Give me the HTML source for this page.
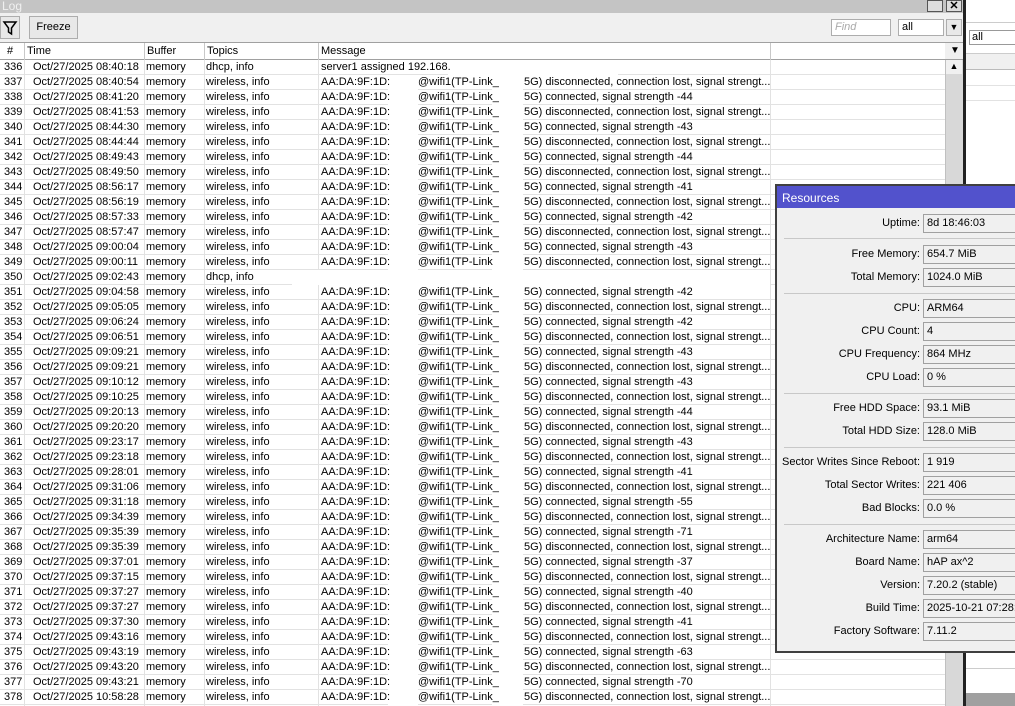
<!DOCTYPE html>
<html><head><meta charset="utf-8"><style>
*{margin:0;padding:0;box-sizing:border-box}
body{width:1015px;height:706px;overflow:hidden;position:relative;background:#fff;font-family:"Liberation Sans",sans-serif;font-size:11px;color:#000}
.abs{position:absolute}
#title{left:0;top:0;width:966px;height:13px;background:#c4c4c4;color:#f0f0f0;font-size:12px;line-height:12px;padding-left:2px}
#tb{left:0;top:13px;width:966px;height:29px;background:#f0f0f0}
.btn{position:absolute;border:1px solid #adadad;background:#e8e8e8}
#hdr{left:0;top:42px;width:945px;height:18px;background:#fff;border-top:1px solid #a0a0a0;border-bottom:1px solid #a0a0a0}
#hdr span{position:absolute;top:2px}
.vl{position:absolute;top:0;width:1px;height:17px;background:#c8c8c8}
#body{left:0;top:60px;width:945px;height:646px}
.r{position:relative;height:15px;border-bottom:1px solid #e2e2e2;line-height:14px;white-space:nowrap}
.r span{position:absolute;top:0}
.n{left:4px}.t{left:33px}.b{left:146px}.p{left:206px}.m{left:321px}.m2{left:418px}.m3{left:524px}
.g{background:#fff;height:15px;top:0}
.c{position:absolute;top:0;width:1px;height:646px;background:#e2e2e2}
#res{left:775px;top:184px;width:245px;height:469px;border:2px solid #404040;border-right:none;background:#f0f0f0}
#rt{left:0;top:0;width:243px;height:22px;background:#5252cc;color:#fff;padding:5px 0 0 5px;font-size:12px}
.lb{position:absolute;right:100px;text-align:right;white-space:nowrap}
.vb{position:absolute;left:146px;width:100px;height:19px;border:1px solid #a0a0a0;background:#f0f0f0;padding:2px 0 0 3px;white-space:nowrap}
.sp{position:absolute;left:7px;width:240px;height:1px;background:#c8c8c8}
</style></head><body>
<div id="title" class="abs">Log</div>
<div class="abs" style="left:927px;top:0;width:16px;height:12px;border:1px solid #555;background:#ddd"></div>
<div class="abs" style="left:946px;top:0;width:16px;height:12px;border:1px solid #555;background:#ddd;font-size:11px;line-height:10px;text-align:center;font-weight:bold">✕</div>
<div id="tb" class="abs">
<div class="btn" style="left:0;top:3px;width:20px;height:23px"><svg width="18" height="20" viewBox="0 0 18 20"><path d="M3 5h12l-4.5 6v6l-3-2v-4z" fill="none" stroke="#000" stroke-width="1.5"/></svg></div>
<div class="btn" style="left:29px;top:3px;width:49px;height:23px;text-align:center;line-height:21px">Freeze</div>
<div class="btn" style="left:831px;top:6px;width:60px;height:17px;background:#fff;color:#aaa;font-style:italic;padding-left:3px;line-height:15px">Find</div>
<div class="btn" style="left:898px;top:6px;width:46px;height:17px;background:#fff;padding-left:3px;line-height:15px">all</div>
<div class="btn" style="left:946px;top:6px;width:16px;height:17px;font-size:9px;text-align:center;line-height:15px">▼</div>
</div>
<div id="hdr" class="abs">
<span style="left:7px">#</span><span style="left:27px">Time</span><span style="left:147px">Buffer</span><span style="left:207px">Topics</span><span style="left:321px">Message</span>
<div class="vl" style="left:24px"></div><div class="vl" style="left:144px"></div><div class="vl" style="left:204px"></div><div class="vl" style="left:318px"></div><div class="vl" style="left:770px"></div>
</div>
<div class="abs" style="left:945px;top:42px;width:20px;height:18px;background:#f0f0f0;border-top:1px solid #a0a0a0;border-bottom:1px solid #a0a0a0;font-size:10px;text-align:center;line-height:16px">▼</div>
<div class="abs" style="left:945px;top:60px;width:18px;height:646px;background:#d8d8d8;border-left:1px solid #c0c0c0"></div>
<div class="abs" style="left:946px;top:60px;width:16px;height:14px;background:#f0f0f0;font-size:9px;text-align:center;line-height:13px">▲</div>
<div class="abs" style="left:963px;top:0;width:3px;height:706px;background:#222"></div>
<div class="abs" style="left:966px;top:0;width:49px;height:706px;background:#fff"></div>
<div class="abs" style="left:966px;top:22px;width:49px;height:1px;background:#ccc"></div>
<div class="abs" style="left:969px;top:30px;width:50px;height:15px;border:1px solid #999;padding-left:2px;line-height:13px">all</div>
<div class="abs" style="left:966px;top:53px;width:49px;height:17px;background:#f0f0f0;border-top:1px solid #ccc;border-bottom:1px solid #bbb"></div>
<div class="abs" style="left:966px;top:85px;width:49px;height:1px;background:#e2e2e2"></div>
<div class="abs" style="left:966px;top:100px;width:49px;height:1px;background:#e2e2e2"></div>
<div class="abs" style="left:966px;top:668px;width:49px;height:1px;background:#ccc"></div>
<div class="abs" style="left:966px;top:693px;width:49px;height:13px;background:#a0a0a0"></div>
<div id="body" class="abs">
<div class="c" style="left:24px"></div><div class="c" style="left:144px"></div><div class="c" style="left:204px"></div><div class="c" style="left:318px"></div><div class="c" style="left:770px"></div>
<div class="r"><span class="n">336</span><span class="t">Oct/27/2025 08:40:18</span><span class="b">memory</span><span class="p">dhcp, info</span><span class="g" style="left:448px;width:170px"></span><span class="m">server1 assigned 192.168.</span></div>
<div class="r"><span class="n">337</span><span class="t">Oct/27/2025 08:40:54</span><span class="b">memory</span><span class="p">wireless, info</span><span class="g" style="left:388px;width:30px"></span><span class="g" style="left:492px;width:31px"></span><span class="m">AA:DA:9F:1D:</span><span class="m2">@wifi1(TP-Link_</span><span class="m3">5G) disconnected, connection lost, signal strengt...</span></div>
<div class="r"><span class="n">338</span><span class="t">Oct/27/2025 08:41:20</span><span class="b">memory</span><span class="p">wireless, info</span><span class="g" style="left:388px;width:30px"></span><span class="g" style="left:492px;width:31px"></span><span class="m">AA:DA:9F:1D:</span><span class="m2">@wifi1(TP-Link_</span><span class="m3">5G) connected, signal strength -44</span></div>
<div class="r"><span class="n">339</span><span class="t">Oct/27/2025 08:41:53</span><span class="b">memory</span><span class="p">wireless, info</span><span class="g" style="left:388px;width:30px"></span><span class="g" style="left:492px;width:31px"></span><span class="m">AA:DA:9F:1D:</span><span class="m2">@wifi1(TP-Link_</span><span class="m3">5G) disconnected, connection lost, signal strengt...</span></div>
<div class="r"><span class="n">340</span><span class="t">Oct/27/2025 08:44:30</span><span class="b">memory</span><span class="p">wireless, info</span><span class="g" style="left:388px;width:30px"></span><span class="g" style="left:492px;width:31px"></span><span class="m">AA:DA:9F:1D:</span><span class="m2">@wifi1(TP-Link_</span><span class="m3">5G) connected, signal strength -43</span></div>
<div class="r"><span class="n">341</span><span class="t">Oct/27/2025 08:44:44</span><span class="b">memory</span><span class="p">wireless, info</span><span class="g" style="left:388px;width:30px"></span><span class="g" style="left:492px;width:31px"></span><span class="m">AA:DA:9F:1D:</span><span class="m2">@wifi1(TP-Link_</span><span class="m3">5G) disconnected, connection lost, signal strengt...</span></div>
<div class="r"><span class="n">342</span><span class="t">Oct/27/2025 08:49:43</span><span class="b">memory</span><span class="p">wireless, info</span><span class="g" style="left:388px;width:30px"></span><span class="g" style="left:492px;width:31px"></span><span class="m">AA:DA:9F:1D:</span><span class="m2">@wifi1(TP-Link_</span><span class="m3">5G) connected, signal strength -44</span></div>
<div class="r"><span class="n">343</span><span class="t">Oct/27/2025 08:49:50</span><span class="b">memory</span><span class="p">wireless, info</span><span class="g" style="left:388px;width:30px"></span><span class="g" style="left:492px;width:31px"></span><span class="m">AA:DA:9F:1D:</span><span class="m2">@wifi1(TP-Link_</span><span class="m3">5G) disconnected, connection lost, signal strengt...</span></div>
<div class="r"><span class="n">344</span><span class="t">Oct/27/2025 08:56:17</span><span class="b">memory</span><span class="p">wireless, info</span><span class="g" style="left:388px;width:30px"></span><span class="g" style="left:492px;width:31px"></span><span class="m">AA:DA:9F:1D:</span><span class="m2">@wifi1(TP-Link_</span><span class="m3">5G) connected, signal strength -41</span></div>
<div class="r"><span class="n">345</span><span class="t">Oct/27/2025 08:56:19</span><span class="b">memory</span><span class="p">wireless, info</span><span class="g" style="left:388px;width:30px"></span><span class="g" style="left:492px;width:31px"></span><span class="m">AA:DA:9F:1D:</span><span class="m2">@wifi1(TP-Link_</span><span class="m3">5G) disconnected, connection lost, signal strengt...</span></div>
<div class="r"><span class="n">346</span><span class="t">Oct/27/2025 08:57:33</span><span class="b">memory</span><span class="p">wireless, info</span><span class="g" style="left:388px;width:30px"></span><span class="g" style="left:492px;width:31px"></span><span class="m">AA:DA:9F:1D:</span><span class="m2">@wifi1(TP-Link_</span><span class="m3">5G) connected, signal strength -42</span></div>
<div class="r"><span class="n">347</span><span class="t">Oct/27/2025 08:57:47</span><span class="b">memory</span><span class="p">wireless, info</span><span class="g" style="left:388px;width:30px"></span><span class="g" style="left:492px;width:31px"></span><span class="m">AA:DA:9F:1D:</span><span class="m2">@wifi1(TP-Link_</span><span class="m3">5G) disconnected, connection lost, signal strengt...</span></div>
<div class="r"><span class="n">348</span><span class="t">Oct/27/2025 09:00:04</span><span class="b">memory</span><span class="p">wireless, info</span><span class="g" style="left:388px;width:30px"></span><span class="g" style="left:492px;width:31px"></span><span class="m">AA:DA:9F:1D:</span><span class="m2">@wifi1(TP-Link_</span><span class="m3">5G) connected, signal strength -43</span></div>
<div class="r"><span class="n">349</span><span class="t">Oct/27/2025 09:00:11</span><span class="b">memory</span><span class="p">wireless, info</span><span class="g" style="left:388px;width:30px"></span><span class="g" style="left:492px;width:31px"></span><span class="m">AA:DA:9F:1D:</span><span class="m2">@wifi1(TP-Link</span><span class="m3">5G) disconnected, connection lost, signal strengt...</span></div>
<div class="r"><span class="n">350</span><span class="t">Oct/27/2025 09:02:43</span><span class="b">memory</span><span class="p">dhcp, info</span><span class="g" style="left:292px;width:478px"></span></div>
<div class="r"><span class="n">351</span><span class="t">Oct/27/2025 09:04:58</span><span class="b">memory</span><span class="p">wireless, info</span><span class="g" style="left:388px;width:30px"></span><span class="g" style="left:492px;width:31px"></span><span class="m">AA:DA:9F:1D:</span><span class="m2">@wifi1(TP-Link_</span><span class="m3">5G) connected, signal strength -42</span></div>
<div class="r"><span class="n">352</span><span class="t">Oct/27/2025 09:05:05</span><span class="b">memory</span><span class="p">wireless, info</span><span class="g" style="left:388px;width:30px"></span><span class="g" style="left:492px;width:31px"></span><span class="m">AA:DA:9F:1D:</span><span class="m2">@wifi1(TP-Link_</span><span class="m3">5G) disconnected, connection lost, signal strengt...</span></div>
<div class="r"><span class="n">353</span><span class="t">Oct/27/2025 09:06:24</span><span class="b">memory</span><span class="p">wireless, info</span><span class="g" style="left:388px;width:30px"></span><span class="g" style="left:492px;width:31px"></span><span class="m">AA:DA:9F:1D:</span><span class="m2">@wifi1(TP-Link_</span><span class="m3">5G) connected, signal strength -42</span></div>
<div class="r"><span class="n">354</span><span class="t">Oct/27/2025 09:06:51</span><span class="b">memory</span><span class="p">wireless, info</span><span class="g" style="left:388px;width:30px"></span><span class="g" style="left:492px;width:31px"></span><span class="m">AA:DA:9F:1D:</span><span class="m2">@wifi1(TP-Link_</span><span class="m3">5G) disconnected, connection lost, signal strengt...</span></div>
<div class="r"><span class="n">355</span><span class="t">Oct/27/2025 09:09:21</span><span class="b">memory</span><span class="p">wireless, info</span><span class="g" style="left:388px;width:30px"></span><span class="g" style="left:492px;width:31px"></span><span class="m">AA:DA:9F:1D:</span><span class="m2">@wifi1(TP-Link_</span><span class="m3">5G) connected, signal strength -43</span></div>
<div class="r"><span class="n">356</span><span class="t">Oct/27/2025 09:09:21</span><span class="b">memory</span><span class="p">wireless, info</span><span class="g" style="left:388px;width:30px"></span><span class="g" style="left:492px;width:31px"></span><span class="m">AA:DA:9F:1D:</span><span class="m2">@wifi1(TP-Link_</span><span class="m3">5G) disconnected, connection lost, signal strengt...</span></div>
<div class="r"><span class="n">357</span><span class="t">Oct/27/2025 09:10:12</span><span class="b">memory</span><span class="p">wireless, info</span><span class="g" style="left:388px;width:30px"></span><span class="g" style="left:492px;width:31px"></span><span class="m">AA:DA:9F:1D:</span><span class="m2">@wifi1(TP-Link_</span><span class="m3">5G) connected, signal strength -43</span></div>
<div class="r"><span class="n">358</span><span class="t">Oct/27/2025 09:10:25</span><span class="b">memory</span><span class="p">wireless, info</span><span class="g" style="left:388px;width:30px"></span><span class="g" style="left:492px;width:31px"></span><span class="m">AA:DA:9F:1D:</span><span class="m2">@wifi1(TP-Link_</span><span class="m3">5G) disconnected, connection lost, signal strengt...</span></div>
<div class="r"><span class="n">359</span><span class="t">Oct/27/2025 09:20:13</span><span class="b">memory</span><span class="p">wireless, info</span><span class="g" style="left:388px;width:30px"></span><span class="g" style="left:492px;width:31px"></span><span class="m">AA:DA:9F:1D:</span><span class="m2">@wifi1(TP-Link_</span><span class="m3">5G) connected, signal strength -44</span></div>
<div class="r"><span class="n">360</span><span class="t">Oct/27/2025 09:20:20</span><span class="b">memory</span><span class="p">wireless, info</span><span class="g" style="left:388px;width:30px"></span><span class="g" style="left:492px;width:31px"></span><span class="m">AA:DA:9F:1D:</span><span class="m2">@wifi1(TP-Link_</span><span class="m3">5G) disconnected, connection lost, signal strengt...</span></div>
<div class="r"><span class="n">361</span><span class="t">Oct/27/2025 09:23:17</span><span class="b">memory</span><span class="p">wireless, info</span><span class="g" style="left:388px;width:30px"></span><span class="g" style="left:492px;width:31px"></span><span class="m">AA:DA:9F:1D:</span><span class="m2">@wifi1(TP-Link_</span><span class="m3">5G) connected, signal strength -43</span></div>
<div class="r"><span class="n">362</span><span class="t">Oct/27/2025 09:23:18</span><span class="b">memory</span><span class="p">wireless, info</span><span class="g" style="left:388px;width:30px"></span><span class="g" style="left:492px;width:31px"></span><span class="m">AA:DA:9F:1D:</span><span class="m2">@wifi1(TP-Link_</span><span class="m3">5G) disconnected, connection lost, signal strengt...</span></div>
<div class="r"><span class="n">363</span><span class="t">Oct/27/2025 09:28:01</span><span class="b">memory</span><span class="p">wireless, info</span><span class="g" style="left:388px;width:30px"></span><span class="g" style="left:492px;width:31px"></span><span class="m">AA:DA:9F:1D:</span><span class="m2">@wifi1(TP-Link_</span><span class="m3">5G) connected, signal strength -41</span></div>
<div class="r"><span class="n">364</span><span class="t">Oct/27/2025 09:31:06</span><span class="b">memory</span><span class="p">wireless, info</span><span class="g" style="left:388px;width:30px"></span><span class="g" style="left:492px;width:31px"></span><span class="m">AA:DA:9F:1D:</span><span class="m2">@wifi1(TP-Link_</span><span class="m3">5G) disconnected, connection lost, signal strengt...</span></div>
<div class="r"><span class="n">365</span><span class="t">Oct/27/2025 09:31:18</span><span class="b">memory</span><span class="p">wireless, info</span><span class="g" style="left:388px;width:30px"></span><span class="g" style="left:492px;width:31px"></span><span class="m">AA:DA:9F:1D:</span><span class="m2">@wifi1(TP-Link_</span><span class="m3">5G) connected, signal strength -55</span></div>
<div class="r"><span class="n">366</span><span class="t">Oct/27/2025 09:34:39</span><span class="b">memory</span><span class="p">wireless, info</span><span class="g" style="left:388px;width:30px"></span><span class="g" style="left:492px;width:31px"></span><span class="m">AA:DA:9F:1D:</span><span class="m2">@wifi1(TP-Link_</span><span class="m3">5G) disconnected, connection lost, signal strengt...</span></div>
<div class="r"><span class="n">367</span><span class="t">Oct/27/2025 09:35:39</span><span class="b">memory</span><span class="p">wireless, info</span><span class="g" style="left:388px;width:30px"></span><span class="g" style="left:492px;width:31px"></span><span class="m">AA:DA:9F:1D:</span><span class="m2">@wifi1(TP-Link_</span><span class="m3">5G) connected, signal strength -71</span></div>
<div class="r"><span class="n">368</span><span class="t">Oct/27/2025 09:35:39</span><span class="b">memory</span><span class="p">wireless, info</span><span class="g" style="left:388px;width:30px"></span><span class="g" style="left:492px;width:31px"></span><span class="m">AA:DA:9F:1D:</span><span class="m2">@wifi1(TP-Link_</span><span class="m3">5G) disconnected, connection lost, signal strengt...</span></div>
<div class="r"><span class="n">369</span><span class="t">Oct/27/2025 09:37:01</span><span class="b">memory</span><span class="p">wireless, info</span><span class="g" style="left:388px;width:30px"></span><span class="g" style="left:492px;width:31px"></span><span class="m">AA:DA:9F:1D:</span><span class="m2">@wifi1(TP-Link_</span><span class="m3">5G) connected, signal strength -37</span></div>
<div class="r"><span class="n">370</span><span class="t">Oct/27/2025 09:37:15</span><span class="b">memory</span><span class="p">wireless, info</span><span class="g" style="left:388px;width:30px"></span><span class="g" style="left:492px;width:31px"></span><span class="m">AA:DA:9F:1D:</span><span class="m2">@wifi1(TP-Link_</span><span class="m3">5G) disconnected, connection lost, signal strengt...</span></div>
<div class="r"><span class="n">371</span><span class="t">Oct/27/2025 09:37:27</span><span class="b">memory</span><span class="p">wireless, info</span><span class="g" style="left:388px;width:30px"></span><span class="g" style="left:492px;width:31px"></span><span class="m">AA:DA:9F:1D:</span><span class="m2">@wifi1(TP-Link_</span><span class="m3">5G) connected, signal strength -40</span></div>
<div class="r"><span class="n">372</span><span class="t">Oct/27/2025 09:37:27</span><span class="b">memory</span><span class="p">wireless, info</span><span class="g" style="left:388px;width:30px"></span><span class="g" style="left:492px;width:31px"></span><span class="m">AA:DA:9F:1D:</span><span class="m2">@wifi1(TP-Link_</span><span class="m3">5G) disconnected, connection lost, signal strengt...</span></div>
<div class="r"><span class="n">373</span><span class="t">Oct/27/2025 09:37:30</span><span class="b">memory</span><span class="p">wireless, info</span><span class="g" style="left:388px;width:30px"></span><span class="g" style="left:492px;width:31px"></span><span class="m">AA:DA:9F:1D:</span><span class="m2">@wifi1(TP-Link_</span><span class="m3">5G) connected, signal strength -41</span></div>
<div class="r"><span class="n">374</span><span class="t">Oct/27/2025 09:43:16</span><span class="b">memory</span><span class="p">wireless, info</span><span class="g" style="left:388px;width:30px"></span><span class="g" style="left:492px;width:31px"></span><span class="m">AA:DA:9F:1D:</span><span class="m2">@wifi1(TP-Link_</span><span class="m3">5G) disconnected, connection lost, signal strengt...</span></div>
<div class="r"><span class="n">375</span><span class="t">Oct/27/2025 09:43:19</span><span class="b">memory</span><span class="p">wireless, info</span><span class="g" style="left:388px;width:30px"></span><span class="g" style="left:492px;width:31px"></span><span class="m">AA:DA:9F:1D:</span><span class="m2">@wifi1(TP-Link_</span><span class="m3">5G) connected, signal strength -63</span></div>
<div class="r"><span class="n">376</span><span class="t">Oct/27/2025 09:43:20</span><span class="b">memory</span><span class="p">wireless, info</span><span class="g" style="left:388px;width:30px"></span><span class="g" style="left:492px;width:31px"></span><span class="m">AA:DA:9F:1D:</span><span class="m2">@wifi1(TP-Link_</span><span class="m3">5G) disconnected, connection lost, signal strengt...</span></div>
<div class="r"><span class="n">377</span><span class="t">Oct/27/2025 09:43:21</span><span class="b">memory</span><span class="p">wireless, info</span><span class="g" style="left:388px;width:30px"></span><span class="g" style="left:492px;width:31px"></span><span class="m">AA:DA:9F:1D:</span><span class="m2">@wifi1(TP-Link_</span><span class="m3">5G) connected, signal strength -70</span></div>
<div class="r"><span class="n">378</span><span class="t">Oct/27/2025 10:58:28</span><span class="b">memory</span><span class="p">wireless, info</span><span class="g" style="left:388px;width:30px"></span><span class="g" style="left:492px;width:31px"></span><span class="m">AA:DA:9F:1D:</span><span class="m2">@wifi1(TP-Link_</span><span class="m3">5G) disconnected, connection lost, signal strengt...</span></div>
</div>
<div id="res" class="abs">
<div id="rt" class="abs">Resources</div>
<div class="lb" style="top:31px">Uptime:</div><div class="vb" style="top:28px">8d 18:46:03</div>
<div class="sp" style="top:52px"></div>
<div class="lb" style="top:62px">Free Memory:</div><div class="vb" style="top:59px">654.7 MiB</div>
<div class="lb" style="top:85px">Total Memory:</div><div class="vb" style="top:82px">1024.0 MiB</div>
<div class="sp" style="top:107px"></div>
<div class="lb" style="top:116px">CPU:</div><div class="vb" style="top:113px">ARM64</div>
<div class="lb" style="top:139px">CPU Count:</div><div class="vb" style="top:136px">4</div>
<div class="lb" style="top:162px">CPU Frequency:</div><div class="vb" style="top:159px">864 MHz</div>
<div class="lb" style="top:185px">CPU Load:</div><div class="vb" style="top:182px">0 %</div>
<div class="sp" style="top:207px"></div>
<div class="lb" style="top:216px">Free HDD Space:</div><div class="vb" style="top:213px">93.1 MiB</div>
<div class="lb" style="top:239px">Total HDD Size:</div><div class="vb" style="top:236px">128.0 MiB</div>
<div class="sp" style="top:261px"></div>
<div class="lb" style="top:270px">Sector Writes Since Reboot:</div><div class="vb" style="top:267px">1 919</div>
<div class="lb" style="top:293px">Total Sector Writes:</div><div class="vb" style="top:290px">221 406</div>
<div class="lb" style="top:316px">Bad Blocks:</div><div class="vb" style="top:313px">0.0 %</div>
<div class="sp" style="top:338px"></div>
<div class="lb" style="top:347px">Architecture Name:</div><div class="vb" style="top:344px">arm64</div>
<div class="lb" style="top:370px">Board Name:</div><div class="vb" style="top:367px">hAP ax^2</div>
<div class="lb" style="top:393px">Version:</div><div class="vb" style="top:390px">7.20.2 (stable)</div>
<div class="lb" style="top:416px">Build Time:</div><div class="vb" style="top:413px">2025-10-21 07:28:2</div>
<div class="lb" style="top:439px">Factory Software:</div><div class="vb" style="top:436px">7.11.2</div>
</div>
</body></html>
